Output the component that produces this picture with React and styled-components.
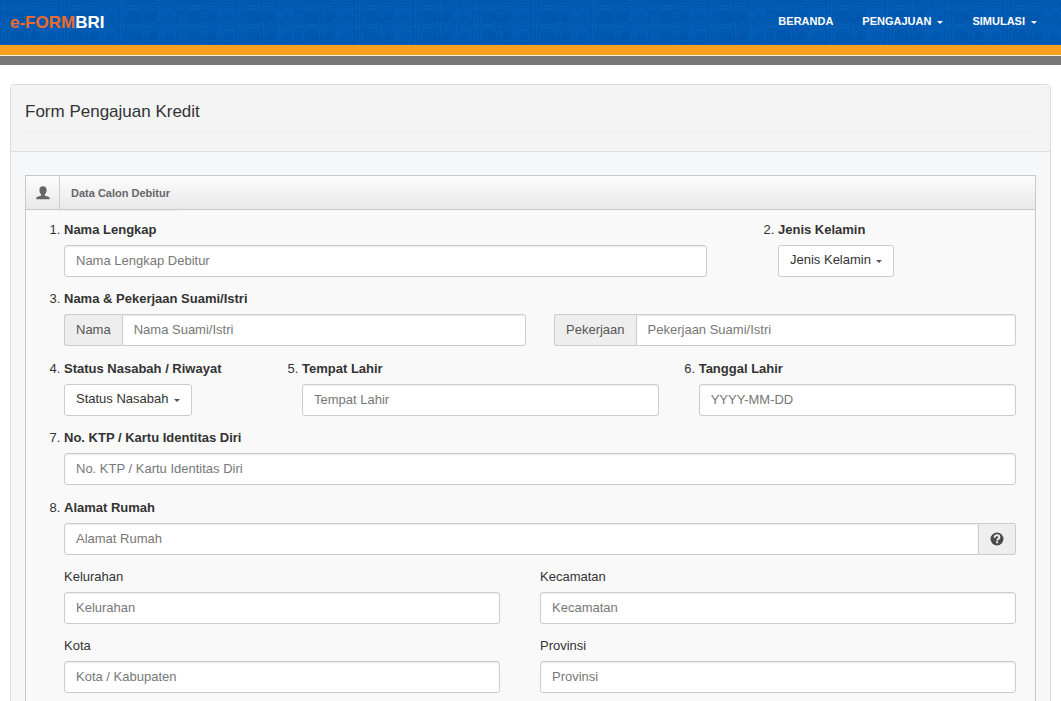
import React from "react";
import styled, { createGlobalStyle } from "styled-components";

const GlobalStyle = createGlobalStyle`
  * {
    box-sizing: border-box;
  }

  body {
    margin: 0;
    background-color: #fff;
    color: #333;
    font-family: "Liberation Sans", Arial, sans-serif;
    font-size: 13px;
    line-height: 20px;
  }
`;

// Header
const Header = styled.header`
  border-bottom: 9px solid #777;
`;

const NavBar = styled.nav`
  position: relative;
  display: flex;
  justify-content: space-between;
  align-items: center;
  height: 45px;
  padding: 0 24px 0 10px;
  background-color: #0058b0;
`;

const Pattern = styled.svg`
  position: absolute;
  top: 0;
  left: 0;
  width: 100%;
  height: 100%;
`;

const Brand = styled.a`
  position: relative;
  color: #fff;
  font-size: 17px;
  font-weight: bold;
  text-decoration: none;

  span {
    color: #eb6b2d;
  }
`;

const Menu = styled.ul`
  position: relative;
  display: flex;
  gap: 29px;
  margin: 0;
  padding: 0 0 3px;
  list-style: none;
`;

const Caret = styled.span`
  border-top: 3px solid currentColor;
  border-left: 3px solid transparent;
  border-right: 3px solid transparent;
`;

const MenuLink = styled.a`
  display: flex;
  align-items: center;
  gap: 6px;
  color: #fff;
  font-size: 11px;
  font-weight: bold;
  text-decoration: none;

  ${Caret} {
    margin-top: 3px;
  }
`;

const Stripe = styled.div`
  height: 11px;
  background-color: #f8a020;
  border-bottom: 1px solid #fff3dc;
`;

// Panel
const Panel = styled.main`
  margin: 19px 10px 0;
  border: 1px solid #ddd;
  border-radius: 4px;
  background-color: #f6f7f9;
`;

const PanelHead = styled.div`
  padding: 17px 14px 19px;
  background-color: #f4f4f4;
  border-bottom: 1px solid #ddd;
  border-radius: 3px 3px 0 0;
`;

const PanelTitle = styled.h1`
  margin: 0;
  padding-bottom: 9px;
  border-bottom: 1px solid #eee;
  font-size: 17px;
  font-weight: normal;
`;

const Section = styled.section`
  margin: 23px 14px;
  border: 1px solid #c8c9cb;
  background-color: #f9f9f9;
`;

const SectionHead = styled.div`
  display: flex;
  height: 34px;
  background-image: linear-gradient(#fdfdfd, #e8e8e8);
  border-bottom: 1px solid #c8c9cb;
`;

const SectionIcon = styled.span`
  display: flex;
  align-items: center;
  justify-content: center;
  width: 34px;
  border-right: 1px solid #cdcdcd;
`;

const SectionTitle = styled.h2`
  position: relative;
  margin: 0;
  padding: 0 11px;
  color: #666;
  font-size: 11px;
  line-height: 34px;

  &::after {
    content: "";
    position: absolute;
    top: calc(100% + 1px);
    left: 0;
    right: 0;
    height: 1px;
    background-color: #eee;
  }
`;

// Form
const Form = styled.form`
  display: flex;
  flex-direction: column;
  gap: 13px;
  padding: 10px 19px 20px 38px;
`;

const FieldGroup = styled.div`
  display: flex;
  flex-direction: column;
  gap: 12px;
`;

const Row = styled.ol`
  display: flex;
  gap: ${({ $gap }) => $gap || "0"};
  margin: 0;
  padding: 0;
`;

const Col = styled.li`
  flex: ${({ $width }) => ($width ? `0 0 ${$width}` : "1")};
  padding-right: ${({ $space }) => $space || "0"};
  list-style: ${({ value }) => (value ? "decimal" : "none")} outside;
`;

const Label = styled.label`
  display: block;
  margin-bottom: 5px;
  font-weight: ${({ $plain }) => ($plain ? "normal" : "bold")};
`;

const Input = styled.input`
  display: block;
  flex: 1;
  width: 100%;
  min-width: 0;
  height: 32px;
  padding: 0 11px 1px;
  border: 1px solid #ccc;
  border-radius: 3px;
  background-color: #fff;
  box-shadow: inset 0 1px 1px rgba(0, 0, 0, 0.08);
  color: #555;
  font: inherit;

  &::placeholder {
    color: #777;
    opacity: 1;
  }
`;

const Group = styled.div`
  display: flex;
  flex: 1;

  label + ${Input} {
    border-radius: 0 3px 3px 0;
  }

  ${Input}:first-child {
    border-radius: 3px 0 0 3px;
  }
`;

const Addon = styled.label`
  display: flex;
  align-items: center;
  padding: 0 11px;
  border: 1px solid #ccc;
  border-right: none;
  border-radius: 3px 0 0 3px;
  background-color: #eee;
  color: #555;
`;

const HelpButton = styled.button`
  display: flex;
  align-items: center;
  padding: 0 11px;
  border: 1px solid #ccc;
  border-left: none;
  border-radius: 0 3px 3px 0;
  background-color: #eee;
`;

const SelectWrap = styled.div`
  position: relative;
  display: inline-flex;

  ${Caret} {
    position: absolute;
    top: 15px;
    right: 12px;
    color: #555;
    pointer-events: none;
  }
`;

const Select = styled.select`
  appearance: none;
  height: 32px;
  padding: 0 22px 2px 11px;
  border: 1px solid #ccc;
  border-radius: 3px;
  background-color: #fff;
  color: #333;
  font: inherit;
`;

function UserIcon() {
  return (
    <svg width="14" height="14" viewBox="0 0 14 14" fill="#666" aria-hidden="true">
      <path d="M7 0.300C4.600 0.300 3.400 1.800 3.400 3.900c0 2 0.700 3.400 1.700 4.300v1.200c-1.100 0.600-2.800 0.900-4 1.500C0.400 11.300 0.200 12 0.200 13.300h13.600c0-1.300-0.200-2-0.900-2.400-1.200-0.600-2.900-0.900-4-1.500V8.200c1-0.900 1.700-2.300 1.700-4.300C10.600 1.800 9.400 0.300 7 0.300Z" />
    </svg>
  );
}

function HelpIcon() {
  return (
    <svg width="14" height="14" viewBox="0 0 14 14" aria-hidden="true">
      <circle cx="7" cy="7" r="6.500" fill="#4a4a4a" />
      <path
        d="M4.600 5.700C4.600 4 5.500 3.300 7 3.300S9.400 4 9.400 5.200C9.400 6.900 7.200 6.700 7.200 8.400"
        fill="none"
        stroke="#eee"
        strokeWidth="2"
      />
      <path d="M6.100 9.300h2.100v1.900H6.100z" fill="#eee" />
    </svg>
  );
}

function BatikPattern() {
  return (
    <Pattern aria-hidden="true">
      <defs>
        <pattern id="batik" width="59" height="19" y="8" patternUnits="userSpaceOnUse">
          <rect x="20" y="9" width="16" height="4" fill="#004c9e" fillOpacity="0.3" />
          <rect x="40" y="2" width="18" height="6" fill="#0064c4" fillOpacity="0.3" />
          <g fill="none" stroke="#1674c8" strokeOpacity="0.25">
            <rect x="8.500" y="1.500" width="16" height="15" rx="5" />
            <rect x="29.500" y="2.500" width="12" height="12" rx="5" />
            <rect x="45.500" y="2.500" width="12" height="12" rx="5" />
            <path d="M2.500 0v19M5.500 0v19M27.500 0v19M43.500 0v19M0 17.500h59M0 0.500h59" />
          </g>
        </pattern>
      </defs>
      <rect width="100%" height="100%" fill="url(#batik)" />
    </Pattern>
  );
}

function Dropdown({ id, text }) {
  return (
    <SelectWrap>
      <Select id={id}>
        <option>{text}</option>
      </Select>
      <Caret />
    </SelectWrap>
  );
}

function Field({ id, label, placeholder, number, width, space, plain }) {
  return (
    <Col value={number} $width={width} $space={space}>
      <Label htmlFor={id} $plain={plain}>
        {label}
      </Label>
      <Input id={id} type="text" placeholder={placeholder || label} />
    </Col>
  );
}

function App() {
  return (
    <>
      <GlobalStyle />
      <Header>
        <NavBar>
          <BatikPattern />
          <Brand href="#">
            <span>e-FORM</span>BRI
          </Brand>
          <Menu>
            <li>
              <MenuLink href="#">BERANDA</MenuLink>
            </li>
            <li>
              <MenuLink href="#">
                PENGAJUAN <Caret />
              </MenuLink>
            </li>
            <li>
              <MenuLink href="#">
                SIMULASI <Caret />
              </MenuLink>
            </li>
          </Menu>
        </NavBar>
        <Stripe />
      </Header>

      <Panel>
        <PanelHead>
          <PanelTitle>Form Pengajuan Kredit</PanelTitle>
        </PanelHead>

        <Section>
          <SectionHead>
            <SectionIcon>
              <UserIcon />
            </SectionIcon>
            <SectionTitle>Data Calon Debitur</SectionTitle>
          </SectionHead>

          <Form>
            <FieldGroup>
              <Row>
                <Field
                  id="nama"
                  number={1}
                  label="Nama Lengkap"
                  placeholder="Nama Lengkap Debitur"
                  width="75%"
                  space="71px"
                />
                <Col value={2}>
                  <Label htmlFor="kelamin">Jenis Kelamin</Label>
                  <Dropdown id="kelamin" text="Jenis Kelamin" />
                </Col>
              </Row>

              {/* Suami / istri */}
              <Row>
                <Col value={3}>
                  <Label as="div">Nama &amp; Pekerjaan Suami/Istri</Label>
                  <Row as="div" $gap="28px">
                    <Group>
                      <Addon htmlFor="pasangan">Nama</Addon>
                      <Input id="pasangan" type="text" placeholder="Nama Suami/Istri" />
                    </Group>
                    <Group>
                      <Addon htmlFor="pekerjaan">Pekerjaan</Addon>
                      <Input id="pekerjaan" type="text" placeholder="Pekerjaan Suami/Istri" />
                    </Group>
                  </Row>
                </Col>
              </Row>
            </FieldGroup>

            <FieldGroup>
              <Row>
                <Col value={4} $width="25%">
                  <Label htmlFor="status">Status Nasabah / Riwayat</Label>
                  <Dropdown id="status" text="Status Nasabah" />
                </Col>
                <Field
                  id="tempat"
                  number={5}
                  label="Tempat Lahir"
                  width="41.6667%"
                  space="40px"
                />
                <Field
                  id="tanggal"
                  number={6}
                  label="Tanggal Lahir"
                  placeholder="YYYY-MM-DD"
                />
              </Row>
              <Row>
                <Field id="ktp" number={7} label="No. KTP / Kartu Identitas Diri" />
              </Row>
            </FieldGroup>

            {/* Alamat */}
            <FieldGroup>
              <Row>
                <Col value={8}>
                  <Label htmlFor="alamat">Alamat Rumah</Label>
                  <Group>
                    <Input id="alamat" type="text" placeholder="Alamat Rumah" />
                    <HelpButton type="button" aria-label="Bantuan">
                      <HelpIcon />
                    </HelpButton>
                  </Group>
                </Col>
              </Row>
              <Row>
                <Field id="kelurahan" label="Kelurahan" width="50%" space="40px" plain />
                <Field id="kecamatan" label="Kecamatan" plain />
              </Row>
              <Row>
                <Field
                  id="kota"
                  label="Kota"
                  placeholder="Kota / Kabupaten"
                  width="50%"
                  space="40px"
                  plain
                />
                <Field id="provinsi" label="Provinsi" plain />
              </Row>
            </FieldGroup>
          </Form>
        </Section>
      </Panel>
    </>
  );
}

export default App;
